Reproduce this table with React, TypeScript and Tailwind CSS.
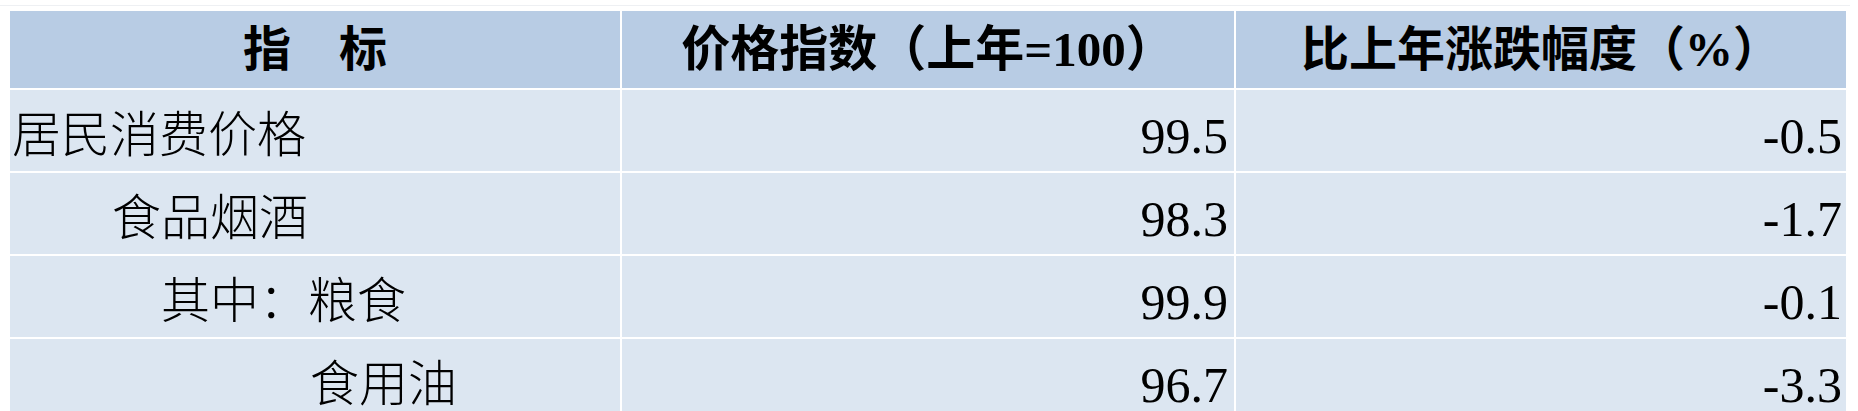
const rows = [
  { name: "居民消费价格", indent: "pl-[2px]", index: "99.5", change: "-0.5" },
  { name: "食品烟酒", indent: "pl-[102px]", index: "98.3", change: "-1.7" },
  { name: "其中：粮食", indent: "pl-[151px]", index: "99.9", change: "-0.1" },
  { name: "食用油", indent: "pl-[300px]", index: "96.7", change: "-3.3" },
];

const font = "font-['Liberation_Serif','Noto_Sans_CJK_SC',serif]";

export default function App() {
  return (
    <div className={`w-[1858px] h-[411px] overflow-hidden bg-white text-black ${font}`}>
      <div className="pt-[5px]">
        <div className="h-px w-[1850px] bg-[#eef0f3]" />
      </div>
      <div className="ml-[10px] mt-[5px] grid grid-cols-[610px_612px_610px] gap-x-[2px] gap-y-[2px] [grid-template-rows:77px_81px_81px_81px_81px]">
        <div className="bg-[#b8cce4] flex items-center justify-center text-[48px] font-bold leading-none">
          指　标
        </div>
        <div className="bg-[#b8cce4] flex items-center justify-center text-[49px] font-bold leading-none">
          价格指数（上年=100）
        </div>
        <div className="bg-[#b8cce4] flex items-center justify-center text-[48px] font-bold leading-none">
          比上年涨跌幅度（%）
        </div>
        {rows.map((r) => (
          <Row key={r.name} {...r} />
        ))}
      </div>
    </div>
  );
}

function Row({
  name,
  indent,
  index,
  change,
}: {
  name: string;
  indent: string;
  index: string;
  change: string;
}) {
  return (
    <>
      <div className={`bg-[#dce6f1] flex items-center pt-[10px] text-[49px] font-light leading-none ${indent}`}>
        {name}
      </div>
      <div className="bg-[#dce6f1] flex items-center justify-end pt-[10px] pr-[6px] text-[50px] leading-none">
        {index}
      </div>
      <div className="bg-[#dce6f1] flex items-center justify-end pt-[10px] pr-[4px] text-[50px] leading-none">
        {change}
      </div>
    </>
  );
}
